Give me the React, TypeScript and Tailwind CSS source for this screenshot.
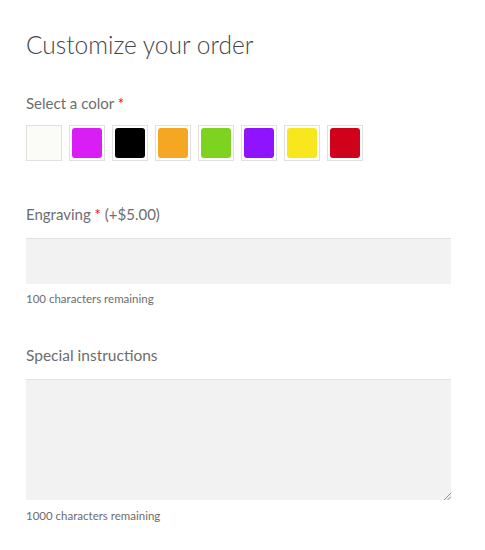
import React from "react";

const colors = ["#fbfbf8", "#d81ef5", "#000000", "#f5a623", "#7ed321", "#9013fe", "#f8e71c", "#d0021b"];

export default function App() {
  return (
    <div className="min-h-[550px] w-[485px] bg-white px-[26px] pt-[28px] text-[#6d6d6d]" style={{ fontFamily: "Lato, 'Noto Sans', sans-serif" }}>
      <h2 className="text-[24.5px] font-light leading-[34px] text-[#43454b]">Customize your order</h2>

      <div className="mt-[31px] text-[15px] leading-[20px]">
        Select a color <span className="text-[#ff0000]">*</span>
      </div>
      <div className="mt-[12px] flex gap-[7px]">
        {colors.map((c, i) => (
          <div key={i} className="flex h-[36px] w-[36px] items-center justify-center border border-[#e0e0e0] bg-white">
            {i === 0 ? (
              <div className="h-[34px] w-[34px]" style={{ backgroundColor: c }} />
            ) : (
              <div className="h-[30px] w-[30px] rounded-[3px]" style={{ backgroundColor: c }} />
            )}
          </div>
        ))}
      </div>

      <div className="mt-[43px] text-[15px] leading-[20px]">
        Engraving <span className="text-[#ff0000]">*</span> (+$5.00)
      </div>
      <div className="mt-[14px] h-[46px] w-[425px] border-t border-[#e2e2e2] bg-[#f2f2f2]" />
      <div className="mt-[8px] text-[11.5px] leading-[14px]">100 characters remaining</div>

      <div className="mt-[39px] text-[15.5px] leading-[20px]">Special instructions</div>
      <div className="relative mt-[14px] h-[121px] w-[425px] border-t border-[#e2e2e2] bg-[#f2f2f2]">
        <svg className="absolute bottom-0 right-0" width="8" height="8" viewBox="0 0 8 8">
          <line x1="1" y1="8" x2="8" y2="1" stroke="#777" strokeWidth="0.8" />
          <line x1="4.5" y1="8" x2="8" y2="4.5" stroke="#777" strokeWidth="0.8" />
        </svg>
      </div>
      <div className="mt-[9px] text-[11.5px] leading-[14px]">1000 characters remaining</div>
    </div>
  );
}
